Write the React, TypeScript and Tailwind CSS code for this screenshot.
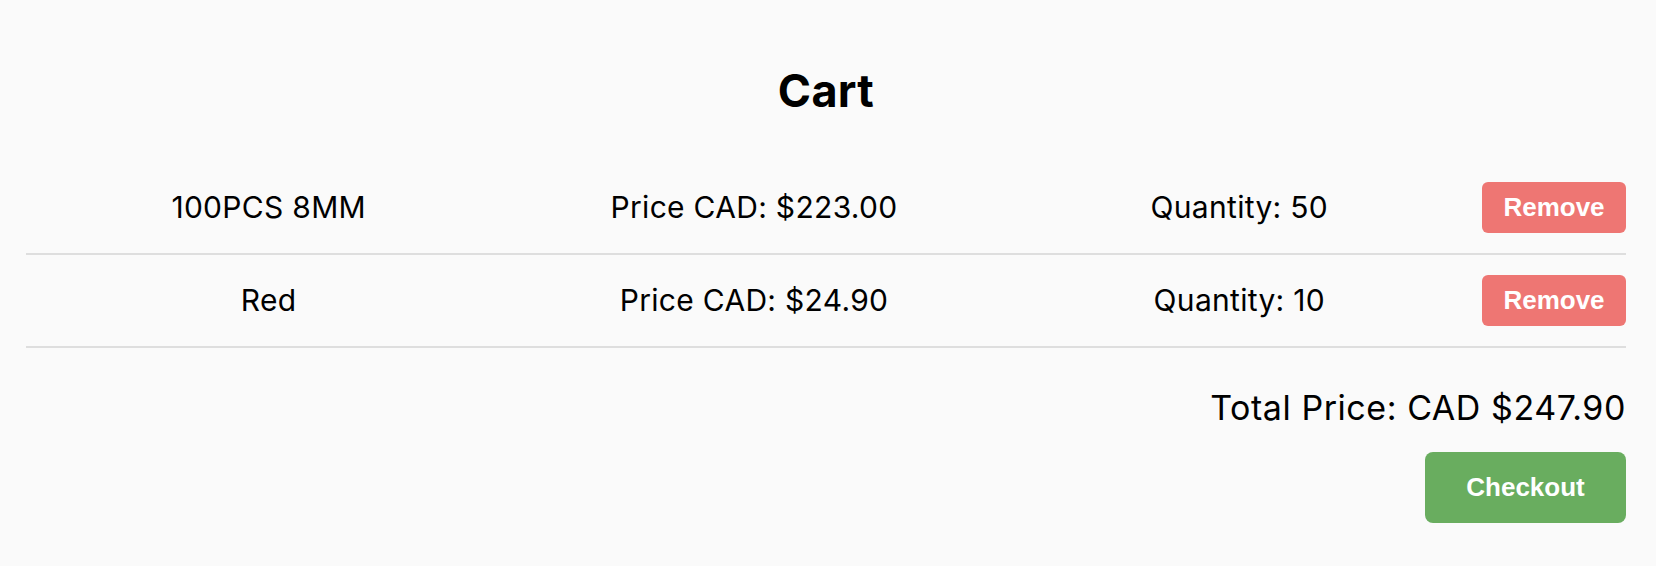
const items = [
  { name: "100PCS 8MM", price: "223.00", quantity: 50 },
  { name: "Red", price: "24.90", quantity: 10 },
]

export default function App() {
  return (
    <div className="min-h-[566px] bg-[#fafafa] text-black font-['Inter',sans-serif]">
      <div className="pl-[26px] pr-[30px] pt-[64px]">
        <h1 className="text-center text-[45px] leading-[54px] font-bold tracking-[0.3px] mb-[44px]">Cart</h1>

        <div>
          {items.map((item, index) => (
            <div key={index} className="flex items-center py-[20px] border-b-2 border-[#dedede] text-[30px] tracking-[0.3px]">
              <div className="flex-1 text-center">{item.name}</div>
              <div className="flex-1 text-center">Price CAD: ${item.price}</div>
              <div className="flex-1 text-center">Quantity: {item.quantity}</div>
              <button className="w-[144px] h-[51px] rounded-[6px] bg-[#ee7673] text-white font-bold text-[26px] tracking-normal font-['Liberation_Sans',Arial,sans-serif]">
                Remove
              </button>
            </div>
          ))}
        </div>

        <div className="flex flex-col items-end pt-[39px]">
          <p className="text-[34px] leading-[41px] tracking-[0.55px]">Total Price: CAD $247.90</p>
          <button className="mt-[24px] w-[201px] h-[71px] rounded-[8px] bg-[#69ad5f] text-white font-bold text-[26px] font-['Liberation_Sans',Arial,sans-serif]">
            Checkout
          </button>
        </div>
      </div>
    </div>
  )
}
